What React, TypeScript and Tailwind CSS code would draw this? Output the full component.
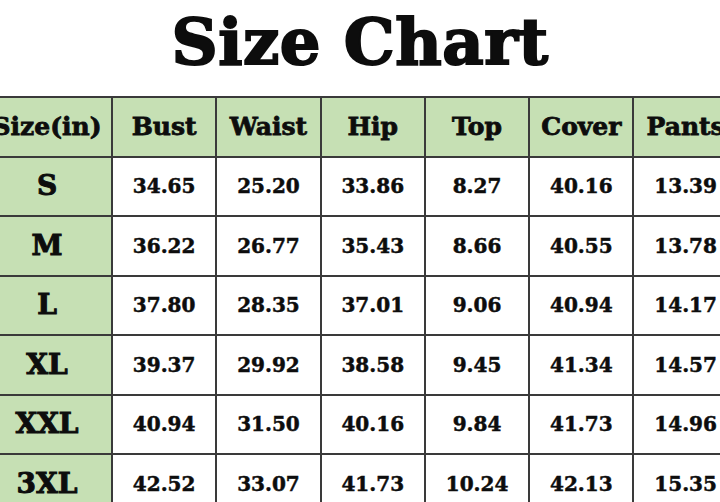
const headers = ["Size(in)", "Bust", "Waist", "Hip", "Top", "Cover", "Pants"];

const rows: [string, string[]][] = [
  ["S", ["34.65", "25.20", "33.86", "8.27", "40.16", "13.39"]],
  ["M", ["36.22", "26.77", "35.43", "8.66", "40.55", "13.78"]],
  ["L", ["37.80", "28.35", "37.01", "9.06", "40.94", "14.17"]],
  ["XL", ["39.37", "29.92", "38.58", "9.45", "41.34", "14.57"]],
  ["XXL", ["40.94", "31.50", "40.16", "9.84", "41.73", "14.96"]],
  ["3XL", ["42.52", "33.07", "41.73", "10.24", "42.13", "15.35"]],
];

export default function App() {
  return (
    <div className="w-[720px] h-[502px] overflow-hidden bg-white text-[#0d0d0d] font-['DejaVu_Serif',serif] font-bold">
      <div className="h-[96px] pt-[10px] text-center text-[64px] leading-none tracking-[0.5px] [-webkit-text-stroke:2px_#0d0d0d]">
        Size Chart
      </div>
      <div className="ml-[-19px] w-max grid grid-cols-[128px_repeat(6,102.3px)] auto-rows-[57.5px] gap-[2px] p-[2px] bg-[#3a3a3a]">
        {headers.map((h) => (
          <div key={h} className="bg-[#c6e0b4] flex items-center justify-center text-[25px] whitespace-nowrap [-webkit-text-stroke:0.8px_#0d0d0d]">
            {h}
          </div>
        ))}
        {rows.map(([size, vals]) => (
          <>
            <div key={size} className="bg-[#c6e0b4] flex items-center justify-center text-[28px] [-webkit-text-stroke:1px_#0d0d0d]">
              {size}
            </div>
            {vals.map((v, i) => (
              <div key={size + i} className="bg-white flex items-center justify-center text-[20px] [-webkit-text-stroke:0.5px_#0d0d0d]">
                {v}
              </div>
            ))}
          </>
        ))}
      </div>
    </div>
  );
}
